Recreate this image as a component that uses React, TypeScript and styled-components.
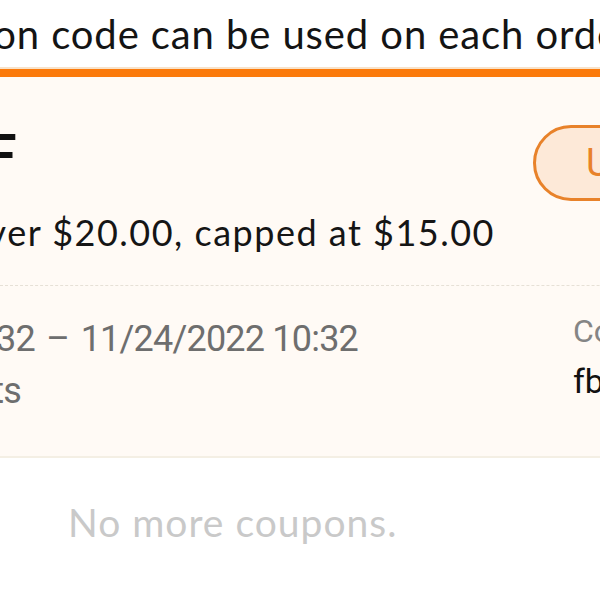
import React from 'react';
import styled, { createGlobalStyle } from 'styled-components';

const GlobalStyle = createGlobalStyle`
  html,
  body {
    margin: 0;
    padding: 0;
    background: #ffffff;
  }

  body {
    width: 600px;
    height: 600px;
    overflow: hidden;
    font-family: Lato, 'Noto Sans', sans-serif;
  }
`;

const Page = styled.div`
  width: 600px;
  height: 600px;
  overflow: hidden;
  display: flex;
  flex-direction: column;
`;

const Notice = styled.div`
  display: flex;
  height: 40px;
  padding: 14px 0 15px;
  font-size: 40px;
  line-height: 40px;
  letter-spacing: 0.9px;
  color: #141414;
  white-space: nowrap;
`;

// a box whose right edge is fixed; its text runs off to the left
const Clip = styled.div<{ $w: number }>`
  flex: 0 0 ${(p) => p.$w}px;
  width: ${(p) => p.$w}px;
  display: flex;
  justify-content: flex-end;
  white-space: pre;
`;

const Tail = styled.span`
  white-space: pre;
`;

const Card = styled.div`
  width: 760px;
  background: #fffaf5;
  border-top: 8px solid #fb7a0b;
  border-bottom: 2px solid #f4efe4;
  box-shadow: 0 -2px 0 #f8e2c9;
`;

const Head = styled.div`
  display: flex;
  height: 208px;
  border-bottom: 1px dashed #e6e0d6;
`;

const Left = styled.div<{ $w: number }>`
  flex: 0 0 ${(p) => p.$w}px;
  display: flex;
  flex-direction: column;
`;

const Title = styled.div`
  margin-top: 48px;
  display: flex;
  font-size: 56px;
  line-height: 56px;
  font-weight: 700;
  color: #111;
`;

const Rule = styled.div`
  margin-top: 33px;
  display: flex;
  font-size: 36px;
  line-height: 36px;
  letter-spacing: 1.5px;
  color: #151515;
`;

const UseButton = styled.button`
  margin-top: 48px;
  box-sizing: border-box;
  width: 170px;
  height: 76px;
  padding: 0 0 0 50px;
  border: 3px solid #e8822a;
  border-radius: 38px;
  background: #fde9d8;
  color: #e8822a;
  font-family: Roboto, 'Noto Sans', sans-serif;
  font-size: 38px;
  text-align: left;
`;

const Lower = styled.div`
  display: flex;
  height: 170px;
`;

const Meta = styled.div<{ $top: number }>`
  margin-top: ${(p) => p.$top}px;
  display: flex;
  font-family: Roboto, 'Noto Sans', sans-serif;
  font-size: 36px;
  line-height: 36px;
  letter-spacing: -0.8px;
  color: #6e6e6e;
`;

const Side = styled.div`
  display: flex;
  flex-direction: column;
  font-family: Roboto, 'Noto Sans', sans-serif;
  white-space: nowrap;
`;

const CodeLabel = styled.div`
  margin-top: 29px;
  font-size: 32px;
  line-height: 32px;
  color: #858585;
`;

const CodeValue = styled.div`
  margin-top: 17px;
  font-size: 34px;
  line-height: 34px;
  color: #111;
`;

const Empty = styled.div`
  margin-top: 45px;
  padding-left: 68px;
  font-size: 39px;
  line-height: 39px;
  letter-spacing: 1px;
  color: #c9c9c9;
  white-space: nowrap;
`;

const App = () => {
  return (
    <>
      <GlobalStyle />
      <Page>
        <Notice>
          <Clip $w={40}>Only one coupon</Clip>
          <Tail> code can be used on each order.</Tail>
        </Notice>
        <Card>
          <Head>
            <Left $w={533}>
              <Title>
                <Clip $w={17}>$5 OFF</Clip>
              </Title>
              <Rule>
                <Clip $w={495}>Orders over $20.00, capped at $15.00</Clip>
              </Rule>
            </Left>
            <UseButton>Use</UseButton>
          </Head>
          <Lower>
            <Left $w={573}>
              <Meta $top={35}>
                <Clip $w={358}>{'11/17/2022 10:32\u2004–\u200411/24/2022 10:32'}</Clip>
              </Meta>
              <Meta $top={16}>
                <Clip $w={21}>All products</Clip>
              </Meta>
            </Left>
            <Side>
              <CodeLabel>Code</CodeLabel>
              <CodeValue>fb2022</CodeValue>
            </Side>
          </Lower>
        </Card>
        <Empty>No more coupons.</Empty>
      </Page>
    </>
  );
};

export default App;
